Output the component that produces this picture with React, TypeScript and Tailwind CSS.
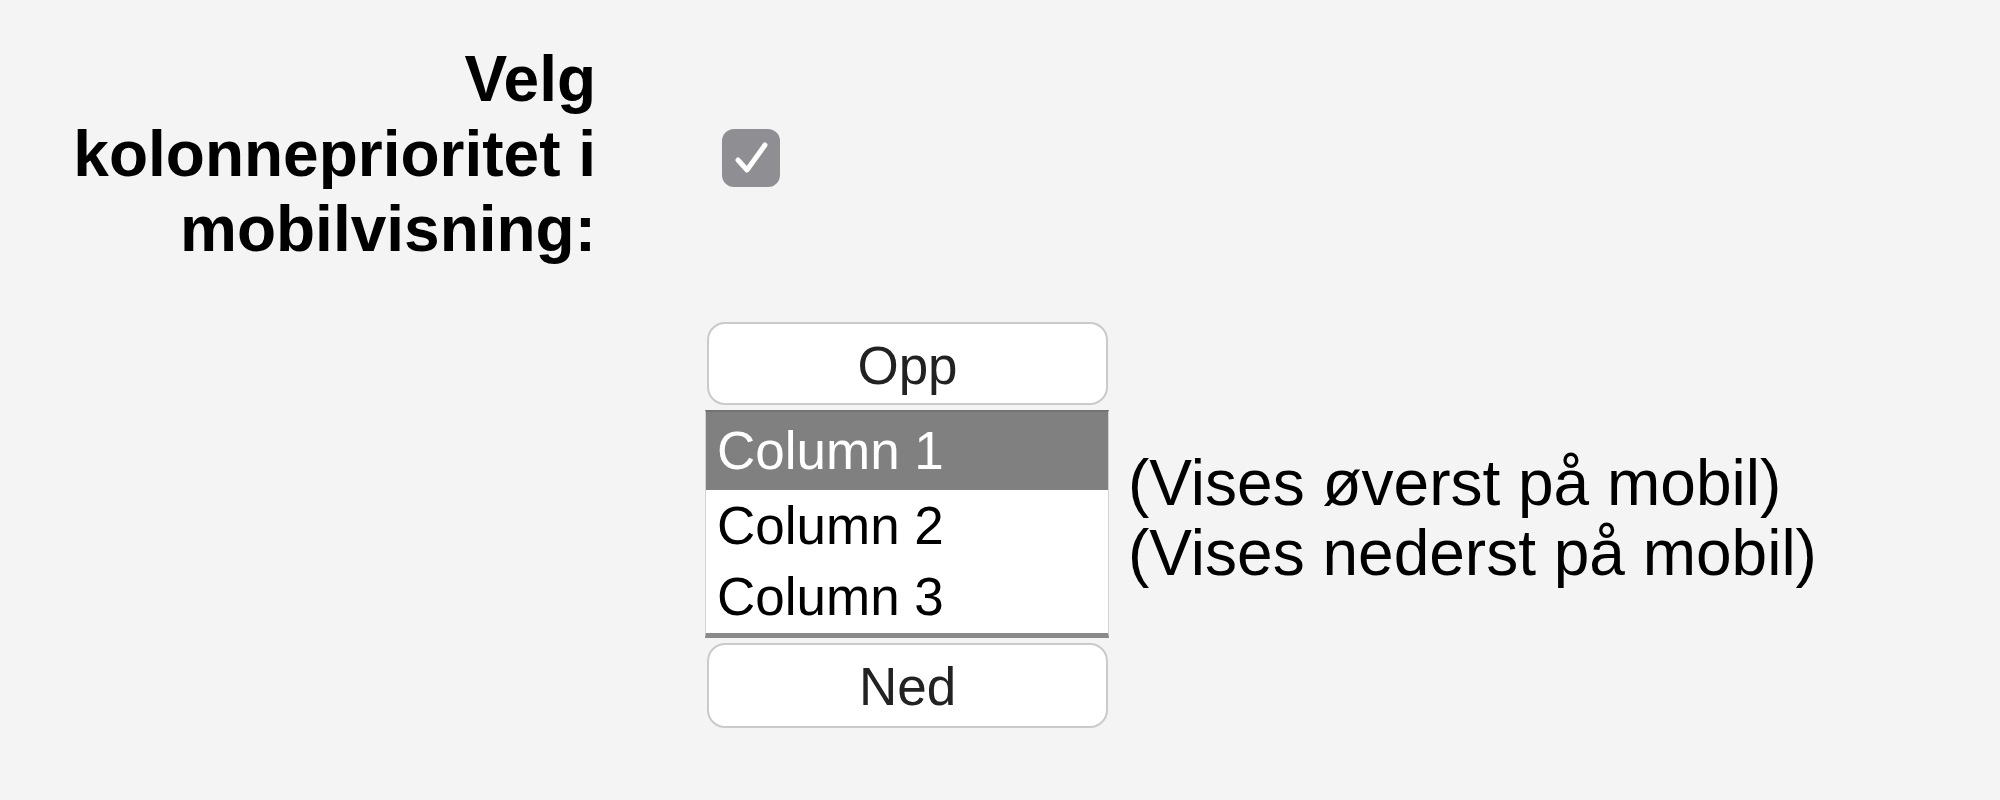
import { useState } from 'react';

const columns = ['Column 1', 'Column 2', 'Column 3'];
// row heights as they show in the list
const rowHeights = ['h-[78px] leading-[78px]', 'h-[72px] leading-[72px]', 'h-[70px] leading-[70px]'];

function CheckBox({ checked, onToggle }: { checked: boolean; onToggle: () => void }) {
  return (
    <button
      onClick={onToggle}
      className="w-[58px] h-[58px] rounded-[12px] bg-[#8e8e93] flex items-center justify-center"
    >
      {checked && (
        <svg viewBox="0 0 58 58" className="w-[58px] h-[58px]">
          <path d="M16 31 L25 41 L43 16" fill="none" stroke="#fff" strokeWidth="5" strokeLinecap="round" strokeLinejoin="round" />
        </svg>
      )}
    </button>
  );
}

export default function App() {
  const [enabled, setEnabled] = useState(true);
  const [items, setItems] = useState(columns);
  const [selected, setSelected] = useState(0);

  const move = (dir: number) => {
    const to = selected + dir;
    if (to < 0 || to >= items.length) return;
    const next = [...items];
    [next[selected], next[to]] = [next[to], next[selected]];
    setItems(next);
    setSelected(to);
  };

  return (
    <div className="min-h-screen bg-[#f4f4f4] text-black font-['Liberation_Sans',Arial,sans-serif]">
      <div className="grid grid-cols-[596px_1fr] gap-x-[109px] pt-[42px]">
        {/* label */}
        <div className="text-right font-bold text-[64px] leading-[75px]">
          Velg
          <br />
          kolonneprioritet i
          <br />
          mobilvisning:
        </div>
        <div className="flex items-center pl-[17px] pt-[6px]">
          <CheckBox checked={enabled} onToggle={() => setEnabled(!enabled)} />
        </div>

        <div />
        <div className="mt-[55px] flex items-center">
          <div className="flex flex-col w-[404px]">
            <button
              onClick={() => move(-1)}
              className="ml-[2px] w-[401px] h-[83px] pt-[4px] rounded-[18px] border-2 border-[#cacaca] bg-white text-[53px] leading-none text-[#222]"
            >
              Opp
            </button>
            <div className="mt-[5px] bg-white border-x border-x-[#d4d4d4] border-t-2 border-t-[#727272] border-b-[5px] border-b-[#8a8a8a] pb-[1px]">
              {items.map((c, i) => (
                <div
                  key={c}
                  onClick={() => setSelected(i)}
                  className={`${rowHeights[i]} pl-[11px] text-[53px] ${
                    i === selected ? 'bg-[#808080] text-white' : 'text-black'
                  }`}
                >
                  {c}
                </div>
              ))}
            </div>
            <button
              onClick={() => move(1)}
              className="mt-[5px] ml-[2px] w-[401px] h-[85px] pt-[2px] rounded-[18px] border-2 border-[#cacaca] bg-white text-[53px] leading-none text-[#222]"
            >
              Ned
            </button>
          </div>
          <div className="ml-[19px] mb-[14px] text-[64px] leading-[70px]">
            (Vises øverst på mobil)
            <br />
            (Vises nederst på mobil)
          </div>
        </div>
      </div>
    </div>
  );
}
